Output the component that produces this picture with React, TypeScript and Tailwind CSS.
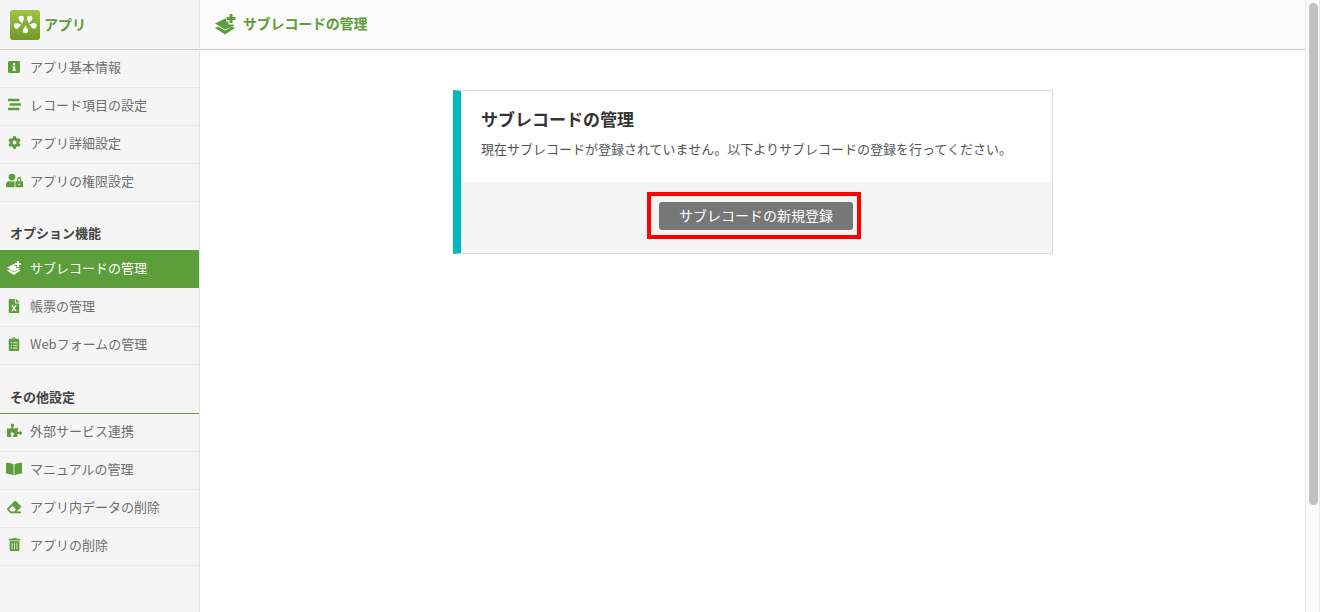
import type { ReactNode } from "react";
import {
  FaBookOpen,
  FaClipboardList,
  FaCog,
  FaEraser,
  FaFileExcel,
  FaPuzzlePiece,
  FaStream,
  FaTrashAlt,
  FaUserLock,
} from "react-icons/fa";

const FONT = "font-['Noto_Sans_CJK_JP','Noto_Sans',sans-serif]";
const DROP = "M0 -4C1.500 -1.500 2.700 -.3 2.700 1A2.700 2.700 0 0 1 -2.700 1C-2.700 -.3 -1.500 -1.500 0 -4Z";

// square with the "i" inside
function InfoSquare() {
  return (
    <svg width="12" height="12" viewBox="0 0 12 12">
      <rect x="0" y="0" width="12" height="12" rx="1.500" fill="currentColor" />
      <rect x="5" y="2.200" width="2.200" height="2" fill="#f6f5f6" />
      <path d="M4.400 5.200h2.800v3.400h.8v1.200H4.400V8.600h.8V6.400h-.8z" fill="#f6f5f6" />
    </svg>
  );
}

// stack of sheets with a plus on top
function LayersPlus({ size }: { size: number }) {
  return (
    <svg width={size} height={size} viewBox="0 0 22 22" fill="currentColor">
      <path d="M14.500 0h3v3h3v3h-3v3h-3V6h-3V3h3z" />
      <path d="M0 9.500 10 4.500l1 .6V7.500h2.500V10.500H18L19.500 11.500 10 15.500z" />
      <path d="M0 14 3 12.500l7 4 7-4 3 1.500L10 20.500z" />
    </svg>
  );
}

function AppLogo() {
  return (
    <div className="h-[30px] w-[30px] rounded-[3px] bg-gradient-to-b from-[#9cc543] to-[#6f9a26]">
      <svg width="30" height="30" viewBox="0 0 30 30" fill="#fff">
        <path d={DROP} transform="translate(11.500 9.500) rotate(170)" />
        <path d={DROP} transform="translate(19.500 9.500) rotate(190)" />
        <path d={DROP} transform="translate(7.500 15.500) rotate(70)" />
        <path d={DROP} transform="translate(23 15.500) rotate(-70)" />
        <path d={DROP} transform="translate(15.500 19.500)" />
      </svg>
    </div>
  );
}

function MenuItem({ icon, label, active, tall }: { icon: ReactNode; label: string; active?: boolean; tall?: boolean }) {
  if (active) {
    return (
      <div className="flex h-[38px] items-center bg-[#5b9e3a] pb-[2px] text-[13px] text-white">
        <span className="mr-[2px] flex w-[28px] shrink-0 justify-center pl-[1px]">{icon}</span>
        <span>{label}</span>
      </div>
    );
  }
  return (
    <div
      className={`flex items-center border-b border-[#e8e7e8] text-[13px] text-[#6e6e6e] ${
        tall ? "h-[39px] pb-[2px]" : "h-[38px] pb-[4px]"
      }`}
    >
      <span className="mr-[2px] flex w-[28px] shrink-0 justify-center text-[#5b9e3a]">{icon}</span>
      <span>{label}</span>
    </div>
  );
}

export default function App() {
  return (
    <div className={`flex h-screen overflow-hidden bg-white ${FONT}`}>
      {/* Left menu */}
      <aside className="w-[200px] shrink-0 border-r border-[#e4e3e4] bg-[#f6f5f6]">
        <div className="flex h-[50px] items-center gap-[4px] border-b border-[#cccccc] pl-[10px]">
          <AppLogo />
          <span className="text-[14px] font-bold text-[#5b9e3a]">アプリ</span>
        </div>

        <MenuItem icon={<InfoSquare />} label="アプリ基本情報" />
        <MenuItem icon={<FaStream size={13} />} label="レコード項目の設定" />
        <MenuItem icon={<FaCog size={13} />} label="アプリ詳細設定" />
        <MenuItem icon={<FaUserLock size={17} />} label="アプリの権限設定" />

        <div className="flex h-[48px] items-end pb-[8px] pl-[10px] text-[13px] font-bold text-[#444]">オプション機能</div>
        <MenuItem icon={<LayersPlus size={15} />} label="サブレコードの管理" active />
        <MenuItem icon={<FaFileExcel size={14} />} label="帳票の管理" tall />
        <MenuItem icon={<FaClipboardList size={14} />} label="Webフォームの管理" />

        <div className="flex h-[49px] items-end border-b border-[#5b9e3a] pb-[7px] pl-[10px] text-[13px] font-bold text-[#444]">
          その他設定
        </div>
        <MenuItem icon={<FaPuzzlePiece size={15} />} label="外部サービス連携" />
        <MenuItem icon={<FaBookOpen size={16} />} label="マニュアルの管理" />
        <MenuItem icon={<FaEraser size={14} />} label="アプリ内データの削除" />
        <MenuItem icon={<FaTrashAlt size={13} />} label="アプリの削除" />
      </aside>

      {/* Main */}
      <main className="flex min-w-0 flex-1 flex-col">
        <header className="flex h-[50px] shrink-0 items-center gap-[6px] border-b border-[#cccccc] bg-[#fbfbfb] pl-[15px] text-[#5b9e3a]">
          <LayersPlus size={22} />
          <h1 className="pb-[2px] text-[14px] font-bold tracking-[-0.2px]">サブレコードの管理</h1>
        </header>

        <div className="flex justify-center pt-[40px] pl-[1px]">
          <section className="w-[600px] border border-l-[8px] border-[#dddddd] border-l-[#00b8be] bg-white">
            <div className="px-[20px] pt-[15px] pb-[24px]">
              <h2 className="text-[17px] font-bold leading-[25px] text-[#333]">サブレコードの管理</h2>
              <p className="mt-[8px] text-[13px] leading-[19px] text-[#555]">
                現在サブレコードが登録されていません。以下よりサブレコードの登録を行ってください。
              </p>
            </div>
            <div className="flex h-[71px] justify-center bg-[#f4f4f4] pt-[20px] pr-[1px]">
              <div className="relative h-[28px] w-[194px]">
                <button className="block h-[28px] w-[194px] rounded-[3px] bg-[#777777] pb-[2px] text-[14px] text-white">
                  サブレコードの新規登録
                </button>
                {/* red annotation frame over the button */}
                <div className="absolute -top-[10px] -left-[12px] h-[47px] w-[214px] border-[4px] border-[#ff0000]" />
              </div>
            </div>
          </section>
        </div>
      </main>

      {/* Page scrollbar */}
      <div className="w-[15px] shrink-0 border-x border-[#e8e8e8] bg-[#fafafa] pt-[3px] pl-[3px]">
        <div className="h-[502px] w-[9px] rounded-full bg-[#c1c1c1]" />
      </div>
    </div>
  );
}
